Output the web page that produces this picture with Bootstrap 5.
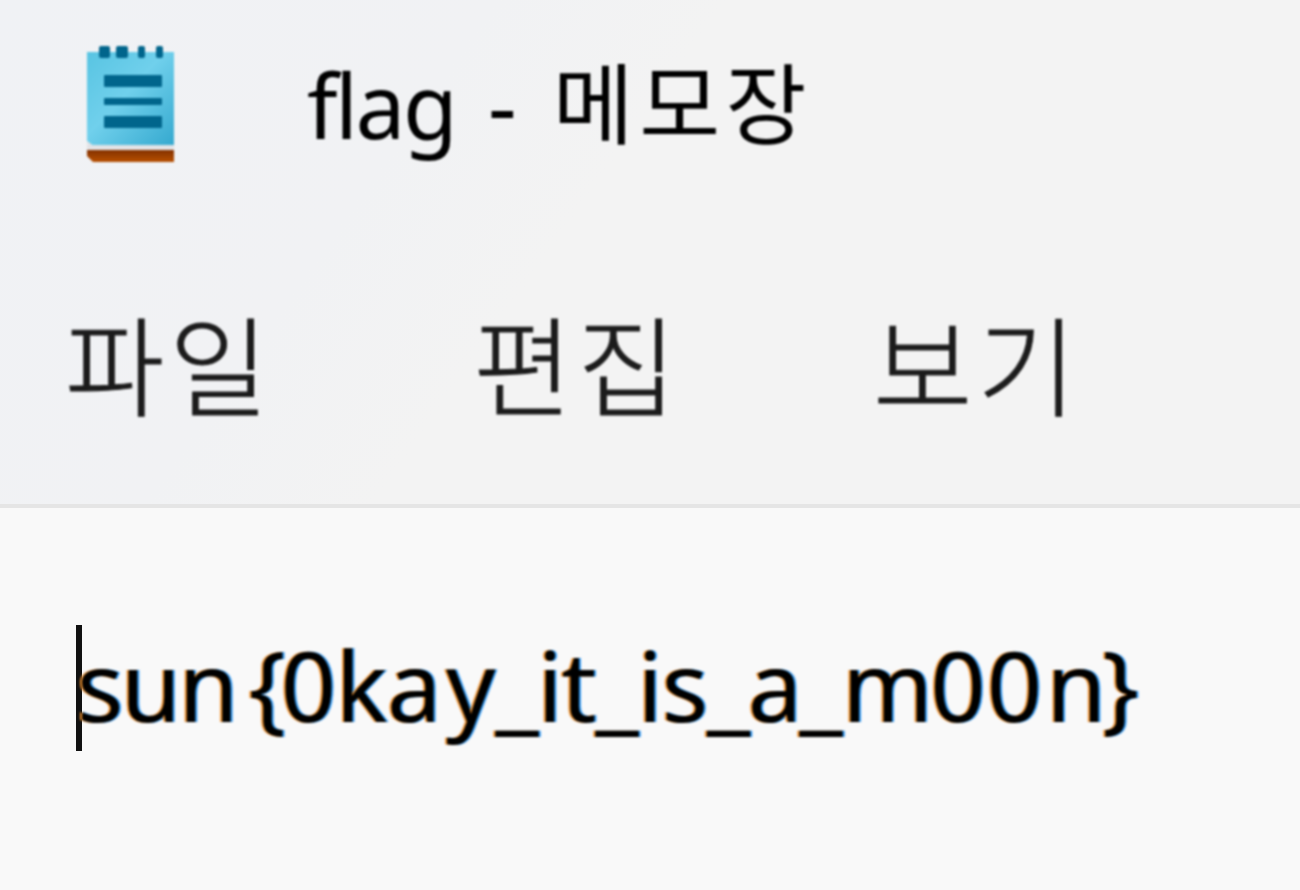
<!DOCTYPE html>
<html lang="ko">
<head>
  <meta charset="UTF-8">
  <meta name="viewport" content="width=device-width, initial-scale=1.0">
  <title>flag - 메모장</title>
  <link rel="stylesheet" href="https://cdn.jsdelivr.net/npm/bootstrap@5.3.0/dist/css/bootstrap.min.css">
  <style>
    body {
      font-family: "Noto Sans", "Noto Sans CJK KR", sans-serif;
      height: 890px;
      overflow: hidden;
      background-color: #f9f9f9;
    }
    .window-top {
      height: 508px;
      background: linear-gradient(125deg, #f0f2f5 0%, #f1f2f4 30%, #f3f3f3 44%);
      border-bottom: 4px solid #e5e5e5;
    }
    .title-bar {
      height: 210px;
      padding-left: 80px;
    }
    .app-icon {
      width: 100px;
      height: 130px;
      margin-top: 40px;
    }
    .app-icon,
    .app-title,
    .menu-bar,
    .editor-text {
      filter: blur(0.8px);
    }
    .app-title {
      margin-left: 127px;
      color: #000;
      font-size: 89px;
      line-height: 202px;
      letter-spacing: -2.5px;
      white-space: pre;
    }
    .app-title .dash {
      margin-left: 12px;
    }
    .app-title .ko {
      margin-left: 18px;
      font-family: "Noto Sans CJK KR", sans-serif;
      font-size: 88px;
      letter-spacing: 5.5px;
      position: relative;
      top: -2px;
    }
    .menu-bar {
      height: 294px;
      padding-left: 65px;
    }
    .menu-bar .nav-link {
      font-family: "Noto Sans CJK KR", sans-serif;
      font-weight: 300;
      font-size: 108px;
      line-height: 302px;
      letter-spacing: 5px;
      padding: 0;
      color: #1b1b1b;
      -webkit-text-stroke: 1px #1b1b1b;
      white-space: nowrap;
    }
    .menu-bar .nav-item {
      width: 408px;
    }
    .menu-bar .nav-item + .nav-item {
      width: 400px;
    }
    .editor {
      height: 382px;
      padding-left: 76px;
      padding-top: 117px;
    }
    .caret {
      width: 6px;
      height: 126px;
      background-color: #111;
    }
    .editor-text {
      margin-left: -5px;
      margin-top: -4px;
      font-size: 97px;
      line-height: 126px;
      color: #000;
      text-shadow: -2px 0 #f0922e, 2px 0 #2e98f4;
      white-space: nowrap;
    }
    /* uneven advances of the hinted UI font */
    .s1 { letter-spacing: -2.5px; margin-right: 13px; }
    .s2 { letter-spacing: -5px; }
    .s3 { letter-spacing: -0.5px; margin-right: 5px; }
    .s4 { letter-spacing: -1px; }
    .s5 { letter-spacing: -2.5px; margin-right: 2px; }
    .s6 { letter-spacing: -2.5px; }
    .s7 { letter-spacing: 1px; margin-right: 3px; }
    .s8 { letter-spacing: -4px; }
  </style>
</head>
<body>
  <div class="window-top">
    <header class="title-bar d-flex align-items-start">
      <svg class="app-icon flex-shrink-0" viewBox="0 0 100 130">
        <defs>
          <linearGradient id="paper" x1="0" y1="0" x2="1" y2="1">
            <stop offset="0" stop-color="#58c4e2"/>
            <stop offset=".45" stop-color="#70d0ec"/>
            <stop offset="1" stop-color="#35a9cf"/>
          </linearGradient>
          <linearGradient id="base" x1="0" y1="0" x2="0" y2="1">
            <stop offset="0" stop-color="#843100"/>
            <stop offset="1" stop-color="#b85000"/>
          </linearGradient>
        </defs>
        <path d="M7 12H94V105H12L7 101Z" fill="url(#paper)"/>
        <path d="M7 101L12 105H94V110H7Z" fill="#e2e3e6"/>
        <path d="M7 110H94V122H13L7 116Z" fill="url(#base)"/>
        <g fill="#00658c">
          <rect x="19" y="6" width="11" height="12" rx="2"/>
          <rect x="36" y="6" width="12" height="12" rx="2"/>
          <rect x="58" y="6" width="7" height="12" rx="2"/>
          <rect x="76" y="6" width="7" height="12" rx="2"/>
          <rect x="24" y="35" width="58" height="12" rx="1"/>
          <rect x="24" y="58" width="58" height="7" rx="1"/>
          <rect x="24" y="76" width="58" height="12" rx="1"/>
        </g>
      </svg>
      <div class="app-title">flag <span class="dash">-</span> <span class="ko">메모장</span></div>
    </header>
    <ul class="menu-bar nav flex-nowrap">
      <li class="nav-item"><a class="nav-link" href="#">파일</a></li>
      <li class="nav-item"><a class="nav-link" href="#">편집</a></li>
      <li class="nav-item"><a class="nav-link" href="#">보기</a></li>
    </ul>
  </div>
  <main class="editor d-flex align-items-start">
    <div class="caret flex-shrink-0"></div>
    <div class="editor-text"><span class="s1">sun</span><span class="s2">{</span><span class="s3">0ka</span>y<span class="s4">_it_is</span><span class="s5">_a_</span><span class="s6">m</span><span class="s7">00</span><span class="s8">n}</span></div>
  </main>
  <script src="https://cdn.jsdelivr.net/npm/bootstrap@5.3.0/dist/js/bootstrap.bundle.min.js"></script>
</body>
</html>
